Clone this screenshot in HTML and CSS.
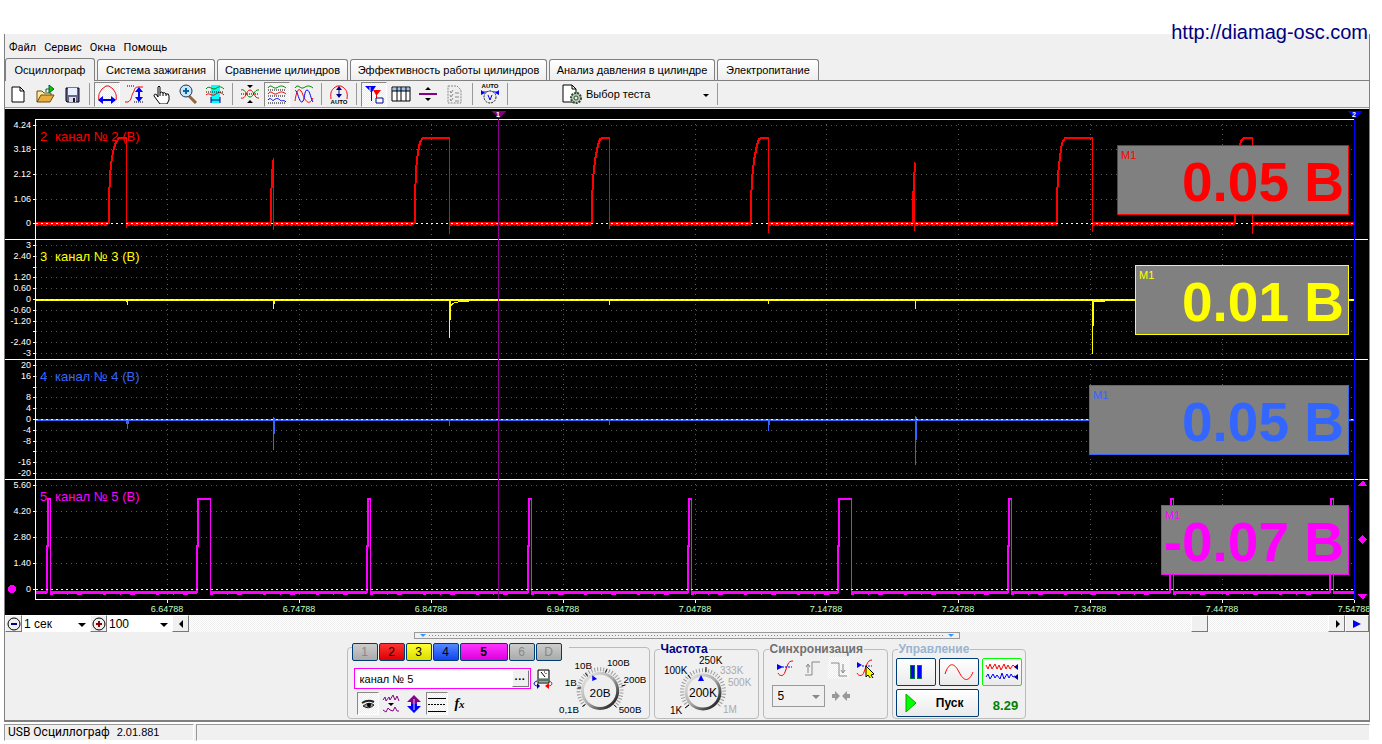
FILE: index.html
```html
<!DOCTYPE html>
<html lang="ru">
<head>
<meta charset="utf-8">
<title>USB Осциллограф</title>
<link rel="stylesheet" href="styles.css">
</head>
<body>
<a class="site-link" href="http://diamag-osc.com">http://diamag-osc.com</a>
<main class="app">
  <nav class="menu">
    <button>Файл</button><button>Сервис</button><button>Окна</button><button>Помощь</button>
  </nav>
  <div class="tabs" role="tablist">
    <button class="tab active" role="tab" aria-selected="true">Осциллограф</button>
    <button class="tab ignition" role="tab">Система зажигания</button>
    <button class="tab compare" role="tab">Сравнение цилиндров</button>
    <button class="tab efficiency" role="tab">Эффективность работы цилиндров</button>
    <button class="tab pressure" role="tab">Анализ давления в цилиндре</button>
    <button class="tab power" role="tab">Электропитание</button>
  </div>
  <div class="toolbar">
    <div class="group">
      <button class="tool" aria-label="Новый"><svg viewBox="0 0 20 20"><path d="M4 3h8l4 4v11H4z" fill="#fff" stroke="#000"/><path d="M12 3v4h4" fill="none" stroke="#000"/></svg></button>
      <button class="tool" aria-label="Открыть"><svg viewBox="0 0 20 20"><path d="M2 18V7h5l2 2h7v3" fill="#ffe9a0" stroke="#6b4c10"/><path d="M2 18l4-7h13l-4 7z" fill="#e8ad3c" stroke="#6b4c10"/><path d="M11 8V5h3" fill="none" stroke="#063"/><path d="M14 1v8l5-4z" fill="#0c0" stroke="#063"/></svg></button>
      <button class="tool" aria-label="Сохранить"><svg viewBox="0 0 20 20"><path d="M4 4h13v14H5l-1-1z" fill="#668" stroke="#002"/><path d="M6 4h9v7H6z" fill="#e8f0ff"/><path d="M7 13h7v5H7z" fill="#ddd"/><path d="M11 14h2v4h-2z" fill="#113"/></svg></button>
    </div>
    <i class="sep"></i>
    <div class="group">
      <button class="tool on" aria-label="Масштаб по времени"><svg viewBox="0 0 20 20"><path d="M2 16C1 10 3 8 5 5l4-3h3l4 3c2 3 4 5 3 11" fill="none" stroke="#f00"/><path d="M2 16h16" stroke="#00f" stroke-width="2"/><path d="M1 16l5-4v8zM19 16l-5-4v8z" fill="#00f"/></svg></button>
      <button class="tool" aria-label="Масштаб по уровню"><svg viewBox="0 0 20 20"><path d="M1 18h3c4-2 3-6 5-9s1-6 5-6h5" fill="none" stroke="#f00"/><path d="M3 2h8M10 18h9" stroke="#000" stroke-dasharray="1 1"/><path d="M15 6v10" stroke="#00f" stroke-width="2"/><path d="M15 3l4 5h-8zM15 18l4-5h-8z" fill="#00f"/></svg></button>
      <button class="tool" aria-label="Рука"><svg viewBox="0 0 20 20"><path d="M7 13V3q1-2 2 0v6q2-2 3 0 2-1 3 1 3-1 3 2v4l-2 4H9L3 12q0-3 3-1z" fill="#fff" stroke="#000"/><path d="M9 9v3M12 9v3M15 10v2" stroke="#000"/></svg></button>
      <button class="tool" aria-label="Лупа"><svg viewBox="0 0 20 20"><path d="M11 12l7 7" stroke="#963" stroke-width="3"/><circle cx="8" cy="7" r="6" fill="#cde6f5" stroke="#235"/><path d="M5 7h6M8 4v6" stroke="#06a" stroke-width="2"/></svg></button>
      <button class="tool" aria-label="Выделение"><svg viewBox="0 0 20 20"><path d="M6 1h9v18H6z" fill="#0ff"/><path d="M1 5c3-4 5 0 8 0s5-5 10 0" fill="none" stroke="#080"/><path d="M1 11c3-3 5 1 8 0s5-5 10 0" fill="none" stroke="#f00"/><path d="M1 8h18" stroke="#000" stroke-dasharray="1 1"/><path d="M6 16h9M6 13v6M15 13v6" stroke="#008"/></svg></button>
    </div>
    <i class="sep"></i>
    <div class="group">
      <button class="tool" aria-label="Центрировать"><svg viewBox="0 0 20 20"><path d="M1 6c5-2 5 7 9 7s4-8 9-7" fill="none" stroke="#080"/><path d="M1 14c5 2 5-8 9-8s4 9 9 8" fill="none" stroke="#f00"/><path d="M1 10h18" stroke="#000" stroke-dasharray="1 1"/><path d="M7 1h6l-3 3zM7 19h6l-3-3z"/></svg></button>
      <button class="tool on" aria-label="Раздельно"><svg viewBox="0 0 20 20"><path d="M1 4c3-5 5 1 8 0s5-4 10 0" fill="none" stroke="#080"/><path d="M1 10c3-5 5 1 8 0s5-4 10 0" fill="none" stroke="#f00"/><path d="M1 16c3-4 4 2 6 0s4-2 6 0 3-1 6 2" fill="none" stroke="#00f"/><path d="M1 6h18M1 12h18M1 19h18" stroke="#000" stroke-dasharray="1 1"/></svg></button>
      <button class="tool" aria-label="Совместно"><svg viewBox="0 0 20 20"><path d="M1 4c3-5 5 1 8 0s5-4 10 0" fill="none" stroke="#080"/><path d="M1 17C3 3 6 3 9 11s7 10 10 3" fill="none" stroke="#f00"/><path d="M1 7c2-3 4 12 7 11s2-12 5-12 4 10 6 12" fill="none" stroke="#00f"/></svg></button>
    </div>
    <i class="sep"></i>
    <div class="group">
      <button class="tool" aria-label="Автомасштаб"><svg viewBox="0 0 20 20"><path d="M2 15C1 8 3 6 5 4l3-2h4l3 2c2 2 4 4 3 11" fill="none" stroke="#f00"/><path d="M10 5v7" stroke="#008"/><path d="M7 6h6l-3-4zM7 10h6l-3 4z" fill="#008"/><text x="10" y="20" class="auto">AUTO</text></svg></button>
    </div>
    <i class="sep"></i>
    <div class="group">
      <button class="tool on" aria-label="Маркеры"><svg viewBox="0 0 20 20"><path d="M1 2h11L8 8v9H7V8z" fill="#00f"/><path d="M9 6h8l-4 5v5h-1v-5z" fill="#f00"/><path d="M6 3v4" stroke="#fff"/><path d="M12 14h7v5h-7z" fill="#fff" stroke="#008"/></svg></button>
      <button class="tool" aria-label="Таблица"><svg viewBox="0 0 20 20"><path d="M1 3h18v14H1z" fill="#fff" stroke="#000"/><path d="M2 4h16v3H2z" fill="#9bc4ee"/><path d="M1 7h18M6 3v14M10 3v14M15 3v14" stroke="#000"/></svg></button>
      <button class="tool" aria-label="Разделитель"><svg viewBox="0 0 20 20"><path d="M1 10h18" stroke="#808" stroke-width="2"/><path d="M7 6h6l-3-3zM7 14h6l-3 3z"/></svg></button>
      <button class="tool" aria-label="Список"><svg viewBox="0 0 20 20"><path d="M3 2h9l4 4v13H3z" fill="#eee" stroke="#888" stroke-dasharray="2 1"/><path d="M5 7l1 2 2-3M5 11l1 2 2-3M5 15l1 2 2-3M10 9h4M10 13h4M10 17h4" fill="none" stroke="#888"/></svg></button>
    </div>
    <i class="sep"></i>
    <div class="group">
      <button class="tool" aria-label="Авто"><svg viewBox="0 0 20 20"><text x="10" y="4" class="auto">AUTO</text><path d="M3 8h5l2-1 2 1h5" fill="none" stroke="#00f"/><path d="M1 6v5l4-2zM19 6v5l-4-2z" fill="#00f"/><circle cx="10" cy="13" r="6" fill="#eee" stroke="#222" stroke-dasharray="2 1"/><path d="M8 11l2 5 2-5" fill="none" stroke="#00f"/></svg></button>
    </div>
    <i class="sep"></i>
    <label class="test">
      <svg viewBox="0 0 20 20"><path d="M1 1h9l4 4v13H1z" fill="#fff" stroke="#000"/><path d="M10 1v4h4" fill="none" stroke="#000"/><circle cx="14" cy="14" r="5" fill="#b5cbb0" stroke="#354a35" stroke-width="2" stroke-dasharray="2 1"/><circle cx="14" cy="14" r="2" fill="#eee" stroke="#354a35"/></svg>
      <select aria-label="Выбор теста"><option>Выбор теста</option></select>
    </label>
    <i class="sep"></i>
  </div>

  <section class="scope" aria-label="Осциллограммы">
    <svg class="chart" viewBox="5 109 1364 506">
      <rect x="5" y="109" width="1364" height="506"/>
      <g class="dots">
        <path d="M36 125H1354M36 149H1354M36 174H1354M36 199H1354"/>
        <path d="M36 245H1354M36 256H1354M36 267H1354M36 277H1354M36 288H1354M36 310H1354M36 321H1354M36 331H1354M36 342H1354M36 353H1354"/>
        <path d="M36 365H1354M36 376H1354M36 387H1354M36 397H1354M36 408H1354M36 430H1354M36 441H1354M36 451H1354M36 462H1354M36 473H1354"/>
        <path d="M36 485H1354M36 511H1354M36 537H1354M36 563H1354"/>
        <path d="M167 124V599M299 124V599M431 124V599M563 124V599M695 124V599M826 124V599M958 124V599M1090 124V599M1222 124V599"/>
      </g>
      <g class="frame">
        <path d="M35 119H1355M35 119V600M35 599H1355M5 239H1368M5 359H1368M5 479H1368"/>
        <path d="M33 125h3M33 149h3M33 174h3M33 199h3M33 223h3M33 245h3M33 256h3M33 267h3M33 277h3M33 288h3M33 299h3M33 310h3M33 321h3M33 331h3M33 342h3M33 353h3M33 365h3M33 376h3M33 387h3M33 397h3M33 408h3M33 419h3M33 430h3M33 441h3M33 451h3M33 462h3M33 473h3M33 485h3M33 511h3M33 537h3M33 563h3M33 589h3"/>
        <path d="M167 600v3M299 600v3M431 600v3M563 600v3M695 600v3M826 600v3M958 600v3M1090 600v3M1222 600v3M1354 600v3"/>
      </g>
      <g class="level">
        <text x="31" y="128">4.24</text><text x="31" y="152">3.18</text><text x="31" y="177">2.12</text><text x="31" y="202">1.06</text><text x="31" y="226">0</text>
        <text x="31" y="248">3</text><text x="31" y="259">2.40</text><text x="31" y="280">1.20</text><text x="31" y="291">0.60</text><text x="31" y="302">0</text><text x="31" y="313">-0.60</text><text x="31" y="324">-1.20</text><text x="31" y="345">-2.40</text><text x="31" y="356">-3</text>
        <text x="31" y="368">20</text><text x="31" y="379">16</text><text x="31" y="400">8</text><text x="31" y="411">4</text><text x="31" y="422">0</text><text x="31" y="433">-4</text><text x="31" y="444">-8</text><text x="31" y="465">-16</text><text x="31" y="476">-20</text>
        <text x="31" y="488">5.60</text><text x="31" y="514">4.20</text><text x="31" y="540">2.80</text><text x="31" y="566">1.40</text><text x="31" y="592">0</text>
      </g>
      <g class="time">
        <text x="167" y="612">6.64788</text><text x="299" y="612">6.74788</text><text x="431" y="612">6.84788</text><text x="563" y="612">6.94788</text><text x="695" y="612">7.04788</text><text x="826" y="612">7.14788</text><text x="958" y="612">7.24788</text><text x="1090" y="612">7.34788</text><text x="1222" y="612">7.44788</text><text x="1354" y="612">7.54788</text>
      </g>
      <g class="names">
        <text x="40" y="141" fill="#f00">2</text><text x="55" y="141" fill="#f00">канал № 2 (В)</text>
        <text x="40" y="261" fill="#ff0">3</text><text x="55" y="261" fill="#ff0">канал № 3 (В)</text>
        <text x="40" y="381" fill="#36f">4</text><text x="55" y="381" fill="#36f">канал № 4 (В)</text>
        <text x="40" y="501" fill="#f0f">5</text><text x="55" y="501" fill="#f0f">канал № 5 (В)</text>
      </g>
      <g class="trace" stroke="#f00">
        <path class="base" d="M36 223H108M127 223H271M273 223H414M449 223H591M609 223H751M768 223H913M915 223H1057M1092 223H1235M1252 223H1354"/>
        <path class="noise" d="M36 225H108M127 225H271M273 225H414M449 225H591M609 225H751M768 225H913M915 225H1057M1092 225H1235M1252 225H1354"/>
        <path class="rise" d="M109 224V200L110 175 112 157 114 148 116 142 119 138 123 138H127"/>
        <path class="rise" d="M271 224V198L273 160"/>
        <path class="rise" d="M415 224V198L416 170 418 152 420 142 423 138H449"/>
        <path class="rise" d="M592 224V202L593 179 595 160 598 145 600 139 603 138H609"/>
        <path class="rise" d="M751 224V202L752 179 754 160 757 145 759 139 762 138H769"/>
        <path class="rise" d="M913 224V200L915 163"/>
        <path class="rise" d="M1057 224V200L1058 175 1060 157 1062 143 1065 138H1092"/>
        <path class="rise" d="M1235 224V202L1236 179 1238 155 1241 141 1244 138H1252"/>
        <path d="M126 137V228M273 158V230M449 137V234M609 137V229M768 137V233M914 162V231M1092 137V232M1252 137V234"/>
      </g>
      <g class="trace" stroke="#ff0">
        <path class="rise" d="M36 300H1354"/>
        <path d="M127 300V305M126 300V302M273 300V309M274 300V304M449 300V338M450 300V320M451 306Q453 301 469 301M609 300V305M768 300V304M915 300V309M1092 300V354M1093 300V326M1093 301H1105"/>
      </g>
      <g class="trace" stroke="#36f">
        <path class="rise" d="M36 420H1354"/>
        <path d="M127 420V429M126 420V424M128 420V424M273 417V450M274 418V434M449 420V426M609 420V425M768 420V431M769 420V425M915 416V465M916 417V440M1092 420V430"/>
      </g>
      <g class="trace" stroke="#f0f">
        <path class="base" d="M36 592H47M50 592H197M210 592H367M370 592H528M531 592H688M691 592H838M851 592H1008M1011 592H1170M1173 592H1330M1333 592H1354"/>
        <path class="noise wide" d="M50 594H197M210 594H367M370 594H528M531 594H688M691 594H838M851 594H1008M1011 594H1170M1173 594H1330"/>
        <path class="rise" d="M47 593V546L48 546V499H51M197 593V546H198V499H211M367 593V546H368V499H371M528 593V546H529V499H532M688 593V546H689V499H692M838 593V546H839V499H852M1008 593V546H1009V499H1012M1170 593V546H1171V499H1174M1330 593V546H1331V499H1334"/>
        <path d="M50 498V593M210 498V593M370 498V593M531 498V593M691 498V593M851 498V593M1011 498V593M1173 498V593M1333 498V593"/>
      </g>
      <path class="zero" d="M36 223H1354M36 299H1354M36 419H1354M36 589H1354"/>
      <rect x="498" y="119" width="1" height="480" fill="#900090"/>
      <path d="M491 111h15l-7 8z" fill="#800080"/>
      <rect x="1354" y="119" width="1" height="481" fill="#00f"/>
      <path d="M1347 111h15l-7 8z" fill="#00f"/>
      <text class="mark" x="498" y="117">1</text><text class="mark" x="1354" y="117">2</text>
      <circle cx="12" cy="589" r="4" fill="#f0f"/>
      <path d="M1358 486h9l-4-6zM1358 594h9l-4 6zM1362 535l5 4-5 5-4-5z" fill="#f0f"/>
    </svg>
    <div class="readouts">
      <div class="slot"><output class="readout red"><small>M1</small>0.05 В</output></div>
      <div class="slot"><output class="readout yellow"><small>M1</small>0.01 В</output></div>
      <div class="slot"><output class="readout blue"><small>M1</small>0.05 В</output></div>
      <div class="slot"><output class="readout pink"><small>M1</small>-0.07 В</output></div>
    </div>
  </section>

  <div class="timebar">
    <button class="raised" aria-label="Уменьшить"><svg viewBox="0 0 14 14"><circle cx="7" cy="7" r="6" fill="none" stroke="#000"/><path d="M4 7h6" stroke="#008" stroke-width="2"/></svg></button>
    <label class="drop"><select aria-label="Развёртка"><option>1 сек</option></select></label>
    <button class="raised" aria-label="Увеличить"><svg viewBox="0 0 14 14"><circle cx="7" cy="7" r="6" fill="none" stroke="#000"/><path d="M4 7h6M7 4v6" stroke="#800" stroke-width="2"/></svg></button>
    <label class="drop short"><select aria-label="Масштаб, %"><option>100</option></select></label>
    <button class="raised" aria-label="Влево"><svg viewBox="0 0 14 14"><path d="M9 3v8L5 7z"/></svg></button>
    <input class="scroll" type="range" min="0" max="1120" value="1000" aria-label="Прокрутка">
    <button class="raised" aria-label="Вправо"><svg viewBox="0 0 14 14"><path d="M6 3v8l4-4z"/></svg></button>
    <button class="raised play" aria-label="В конец"><svg viewBox="0 0 14 14"><path d="M3 3v8l8-4z" fill="#00f"/></svg></button>
  </div>
  <div class="splitter"><i></i><i></i></div>

  <div class="panels">
    <section class="panel channel" aria-label="Канал">
      <div class="channel-left">
        <div class="channels">
          <button class="ch">1</button><button class="ch c2">2</button><button class="ch c3">3</button><button class="ch c4">4</button><button class="ch c5">5</button><button class="ch">6</button><button class="ch">D</button>
        </div>
        <div class="name-row">
          <div class="name"><input type="text" value="канал № 5" aria-label="Имя канала"><button class="raised" aria-label="Выбрать">···</button></div>
          <button class="flat" aria-label="Прибор"><svg viewBox="0 0 20 20"><path d="M5 1h11v13H5z" fill="#ddd" stroke="#000"/><path d="M6 2h9v7H6z" fill="#fff"/><path d="M8 3l4 5M13 4v1M11 3h1" stroke="#000"/><path d="M5 11h11" stroke="#576" stroke-width="3"/><path d="M4 12c-4 1-4 5 1 5" fill="none" stroke="#008"/><path d="M4 14l3 3-3 3z" fill="#008"/><path d="M16 12c4 1 4 5-1 5" fill="none" stroke="#f00"/><path d="M16 14l-4 3 4 3z" fill="#f00"/></svg></button>
        </div>
        <div class="options">
          <button class="tool on" aria-label="Видимость"><svg viewBox="0 0 20 20"><path d="M4 9q6-4 12-1" fill="none" stroke="#222" stroke-width="2"/><path d="M5 12q6-5 11-1-5 5-11 1z" fill="#999" stroke="#222"/><circle cx="11" cy="11" r="2"/></svg></button>
          <button class="tool" aria-label="Сглаживание"><svg viewBox="0 0 20 20"><path d="M2 6l2-3 1 4 3-4 1 3 3-5 2 5 2-4 2 5M2 16l3 2 2-4 2 2 3 1 2-4 2 4h2" fill="none" stroke="#808"/><path d="M7 9h6l-3 3z"/></svg></button>
          <button class="tool" aria-label="Сдвиг"><svg viewBox="0 0 20 20"><path d="M10 1l7 7h-4v2H7V8H3z" fill="#808"/><path d="M10 19l7-7h-4v-2H7v2H3z" fill="#00f"/><path d="M10 5v11" stroke="#ccf"/></svg></button>
          <button class="tool on" aria-label="Уровни"><svg viewBox="0 0 20 20" shape-rendering="crispEdges"><path d="M1 4h18M1 17h18" stroke="#000"/><path d="M1 10h18" stroke="#000" stroke-dasharray="2 1"/></svg></button>
          <button class="tool fx" aria-label="Функция">f<sub>x</sub></button>
        </div>
      </div>
      <svg class="knob" viewBox="556 648 94 72">
        <defs><linearGradient id="rim" x2="1" y2="1"><stop offset="0" stop-color="#eee"/><stop offset=".5" stop-color="#aaa"/><stop offset="1" stop-color="#000"/></linearGradient></defs>
        <path class="ticks" d="M584 706A22 22 0 1 1 616 706"/>
        <path d="M582 707l3-2M577 688h4M585 673l3 4M607 669l-2 4M622 686l4-1M614 705l3 3" stroke="#000"/>
        <circle cx="600" cy="691" r="18" fill="#efefef" stroke="url(#rim)" stroke-width="3"/>
        <path d="M592 675v6l5-2z" fill="#00f"/>
        <text x="558" y="714">0,1В</text><text x="564" y="686">1В</text><text x="574" y="669">10В</text><text x="607" y="666">100В</text><text x="624" y="683">200В</text><text x="619" y="714">500В</text>
        <text class="value" x="600" y="697">20В</text>
      </svg>
    </section>

    <fieldset class="panel freq">
      <legend>Частота</legend>
      <svg class="knob" viewBox="655 655 102 62">
        <path class="ticks" d="M688 706A21 21 0 1 1 718 706"/>
        <path d="M685 708l4-3M688 675l3 4M706 667v5" stroke="#000"/>
        <circle cx="703" cy="692" r="17" fill="#efefef" stroke="url(#rim)" stroke-width="3"/>
        <path d="M698 681h6l-3-6z" fill="#00f"/>
        <text x="670" y="714">1K</text><text x="664" y="674">100K</text><text x="699" y="664">250K</text>
        <g class="dim"><text x="720" y="674">333K</text><text x="728" y="686">500K</text><text x="723" y="713">1M</text></g>
        <text class="value" x="703" y="697">200K</text>
      </svg>
    </fieldset>

    <fieldset class="panel sync">
      <legend>Синхронизация</legend>
      <div class="sync-row">
        <button class="tool" aria-label="Уровень"><svg viewBox="0 0 20 20"><path d="M3 15c2 4 6 3 7-1l3-8c1-2 2-3 5-3" fill="none" stroke="#f00"/><path d="M2 6v6l6-3z" fill="#00f"/><path d="M7 9h10" stroke="#00f" stroke-dasharray="2 1"/></svg></button>
        <button class="tool" aria-label="По фронту" disabled><svg viewBox="0 0 20 20"><path d="M3 17h7V4h8M6 7v8M4 9l2-3 2 3" fill="none" stroke="#888"/></svg></button>
        <button class="tool check" aria-label="По спаду" disabled><svg viewBox="0 0 20 20"><path d="M2 5h8v13h8M14 6v8M12 12l2 3 2-3" fill="none" stroke="#888"/></svg></button>
        <button class="tool" aria-label="Указать"><svg viewBox="0 0 20 20"><path d="M1 15c2 4 6 3 7-1l3-8c1-2 2-4 5-4" fill="none" stroke="#f00"/><path d="M1 4v6l5-3z" fill="#00f"/><path d="M6 8h10" stroke="#00f" stroke-dasharray="2 1"/><path d="M10 8l8 8-3 1 2 3-2 1-3-4-2 2z" fill="#ff0" stroke="#000"/></svg></button>
      </div>
      <div class="sync-row second">
        <label class="drop boxed"><select aria-label="Номер канала"><option>5</option></select></label>
        <svg class="meet" viewBox="0 0 18 12"><path d="M0 4h3V1l5 5-5 5V8H0zM18 4h-3V1l-5 5 5 5V8h3z" fill="#999"/></svg>
      </div>
    </fieldset>

    <fieldset class="panel control">
      <legend>Управление</legend>
      <div class="control-grid">
        <button class="cmd" aria-label="Пауза"><svg viewBox="0 0 34 22"><path d="M11 4h5v14h-5zM18 4h5v14h-5z" fill="#074"/><path d="M12 5h3v12h-3zM19 5h3v12h-3z" fill="#00f"/></svg></button>
        <button class="cmd" aria-label="Синусоида"><svg viewBox="0 0 34 22"><path d="M3 13C7 1 12 1 17 11s10 10 14 0" fill="none" stroke="#f00"/></svg></button>
        <button class="cmd live" aria-label="Поток"><svg viewBox="0 0 34 22"><path d="M1 4l2 4 2-5 2 5 3-5 2 5 2-4 2 5 3-6 2 5 2-4 2 4 3-4 2 2" fill="none" stroke="#f00"/><path d="M1 16l2-3 2 5 3-5 2 4 2-3 3 4 2-6 2 6 3-5 2 4 2-4 2 3 2-1" fill="none" stroke="#00f"/><path d="M33 3v6l-4-3zM33 13v6l-4-3z" fill="#008"/></svg></button>
        <button class="cmd start"><svg viewBox="0 0 12 20"><path d="M1 1v18l10-9z" fill="#0f0" stroke="#0a0"/></svg><span>Пуск</span></button>
        <output class="rate">8.29</output>
      </div>
    </fieldset>
  </div>
</main>
<footer class="status"><span class="cell first">USB Осциллограф<span>2.01.881</span></span><span class="cell"></span></footer>
</body>
</html>
```
FILE: styles.css
```css
* { box-sizing: border-box; }
body {
  margin: 0;
  padding: 34px 12px 0 4px;
  background: #fff;
  color: #000;
  font: 11px "Liberation Sans", Arial, sans-serif;
  position: relative;
}
button, input, select { font: inherit; color: inherit; margin: 0; padding: 0; border: 0; background: none; border-radius: 0; }
select { appearance: none; outline: 0; }
svg { display: block; }
.site-link { position: absolute; right: 14px; top: 20px; font-size: 20px; line-height: 24px; color: #000080; text-decoration: none; }
.app { background: #f0f0f0; border-right: 1px solid #808080; border-bottom: 2px solid #808080; border-left: 1px solid #808080; }
.menu { display: flex; gap: 8px; height: 24px; padding: 2px 4px 0; font-family: Roboto, sans-serif; }

.tabs { display: flex; align-items: flex-end; gap: 2px; height: 23px; border-bottom: 1px solid #808080; }
.tab { height: 21px; border: 1px solid #808080; border-bottom: 0; border-radius: 3px 3px 0 0; background: linear-gradient(#fff, #eee); white-space: nowrap; }
.tab.active { width: 90px; height: 23px; margin-bottom: -1px; background: #f0f0f0; }
.ignition { width: 118px; }
.compare { width: 131px; }
.efficiency { width: 197px; }
.pressure { width: 166px; }
.power { width: 102px; }

.toolbar { display: flex; align-items: center; height: 26px; }
.group { display: flex; gap: 1px; }
.tool { display: grid; place-items: center; width: 26px; height: 25px; border: 1px solid transparent; }
.tool svg { width: 20px; height: 20px; }
.tool.on { border-color: #888 #fff #fff #888; background: repeating-conic-gradient(#fff 0 25%, #ececec 0 50%) 0 0 / 2px 2px; }
.check { background: repeating-conic-gradient(#fff 0 25%, #ececec 0 50%) 0 0 / 2px 2px; }
.sep { width: 9px; height: 22px; background: linear-gradient(#999, #999) center / 1px 100% no-repeat; }
.auto { font: bold 6px "Liberation Sans", sans-serif; text-anchor: middle; }
.test { position: relative; display: flex; align-items: center; gap: 4px; width: 151px; margin: 0 0 0 50px; }
.test svg { width: 20px; height: 20px; }
.test select { flex: 1; min-width: 0; }
.test::after, .drop::after { content: ""; position: absolute; right: 4px; top: 50%; border: 3px solid transparent; border-top: 3px solid #000; border-bottom: 0; }

.scope { position: relative; border-top: 1px solid #999; padding-top: 1px; }
.chart { width: 100%; height: auto; shape-rendering: crispEdges; font-family: "Liberation Sans", Arial, sans-serif; }
.dots { stroke: #5a5a5a; stroke-dasharray: 1 4; }
.frame { stroke: #fff; fill: none; }
.level { fill: #fff; font-size: 9px; text-anchor: end; }
.time { fill: #c0ffc0; font-size: 9px; text-anchor: middle; }
.names { font-size: 13px; }
.trace { fill: none; stroke-width: 1; }
.base { stroke-width: 3; }
.rise { stroke-width: 2; }
.noise { stroke-dasharray: 3 2 1 1 4 3 1 2; }
.noise.wide { stroke-dasharray: 3 14 1 9 5 21; }
.zero { stroke: #fff; stroke-dasharray: 2 3; fill: none; }
.mark { fill: #fff; font-size: 7px; font-weight: bold; text-anchor: middle; }
.readouts { position: absolute; inset: 12px 20px 15px auto; display: grid; grid-template-rows: repeat(4, 1fr); }
.slot { display: flex; justify-content: flex-end; align-items: flex-start; padding-top: 25px; }
.readout { position: relative; height: 70px; border: 1px solid; background: #808080; padding-right: 4px; font-size: 55px; line-height: 72px; font-weight: bold; text-align: right; white-space: nowrap; }
.readout small { position: absolute; left: 3px; top: 3px; font: 11px/12px "Liberation Sans", sans-serif; }
.red { color: #f00; width: 232px; }
.yellow { color: #ff0; width: 214px; }
.blue { color: #36f; width: 260px; }
.pink { color: #f0f; width: 188px; }

.timebar { display: flex; height: 17px; background: #fff; font-size: 12px; }
.raised { display: grid; place-items: center; width: 17px; background: #f0f0f0; border: 1px solid; border-color: #fff #777 #777 #fff; }
.raised svg { width: 14px; height: 14px; }
.play { width: 24px; }
.drop { position: relative; display: flex; width: 68px; }
.drop select { width: 100%; padding-left: 2px; }
.drop::after { border-width: 4px 4px 0; margin-top: -1px; }
.drop.short { width: 65px; }
.scroll { flex: 1; min-width: 0; appearance: none; height: 17px; background: repeating-conic-gradient(#fff 0 25%, #f0f0f0 0 50%) 0 0 / 2px 2px; }
.scroll::-webkit-slider-thumb { appearance: none; width: 17px; height: 17px; background: #f0f0f0; border: 1px solid; border-color: #fff #777 #777 #fff; }
.splitter { display: flex; justify-content: space-between; width: 40%; height: 7px; margin: 0 auto 4px; padding: 1px 5px; border: 1px solid #999; background: repeating-linear-gradient(90deg, #39f 0 1px, transparent 1px 3px) center / calc(100% - 28px) 1px no-repeat; }
.splitter i { border: 3px solid transparent; border-top: 3px solid #39f; border-bottom: 0; }

.panels { display: flex; justify-content: center; align-items: stretch; gap: 4px; height: 76px; margin-bottom: 1px; padding-right: 2px; }
.panel { position: relative; min-width: 0; margin: 0; padding: 0; border: 1px solid #bbb; border-radius: 4px; }
.panel legend { margin-left: 5px; padding: 0 1px; font-weight: bold; font-size: 12px; line-height: 12px; color: #000080; }
.channel { display: flex; width: 303px; margin-top: 4px; }
.channel-left { width: 209px; padding-left: 4px; margin-top: -5px; }
.channels { display: flex; gap: 1px; width: 217px; padding-right: 7px; background: #f0f0f0; }
.ch { width: 26px; height: 18px; border: 1px solid #003c74; border-radius: 2px; background: linear-gradient(#ccc, #aaa); color: #888; font-size: 12px; }
.c2 { background: linear-gradient(#f33, #d00); color: #000; }
.c3 { background: linear-gradient(#ff3, #dd0); color: #000; }
.c4 { background: linear-gradient(#58f, #14e); color: #000; }
.c5 { width: 48px; background: linear-gradient(#f3f, #d0d); color: #000; font-weight: bold; }
.name-row { display: flex; align-items: center; gap: 2px; margin: 7px 0 3px 2px; }
.name { display: flex; width: 177px; height: 21px; border: 1px solid #f0f; background: #fff; }
.name input { flex: 1; min-width: 0; padding-left: 5px; font-size: 11px; }
.name .raised { margin: 1px; font-weight: bold; }
.flat svg { width: 20px; height: 20px; }
.options { display: flex; gap: 1px; padding-left: 5px; }
.options .tool { width: 22px; height: 23px; }
.options .fx { display: block; font: italic bold 14px "Liberation Serif", serif; }
.fx sub { font-size: 11px; vertical-align: baseline; }
.knob { font: 10px "Liberation Sans", sans-serif; }
.channel .knob { width: 94px; height: 72px; }
.freq .knob { width: 102px; height: 62px; }
.ticks { fill: none; stroke: #999; stroke-width: 4; stroke-dasharray: 1 2; }
.knob .value { font-size: 12px; text-anchor: middle; }
.dim { fill: #aaa; }
.freq { width: 105px; }
.sync { width: 125px; }
.sync legend { color: #707070; }
.sync-row { display: flex; align-items: center; gap: 5px; padding: 2px 10px 0; }
.sync .tool { width: 22px; height: 22px; }
.second { padding: 6px 8px 0; gap: 7px; }
.boxed { width: 53px; height: 22px; border: 1px solid #999; font-size: 12px; }
.boxed::after { border-top-color: #888; }
.boxed select { padding-left: 5px; }
.meet { width: 18px; height: 12px; }
.control { width: 134px; }
.control legend { color: #99b4d1; }
.control-grid { display: grid; grid-template-columns: 40px 40px 40px; grid-template-rows: 28px 28px; gap: 3px; padding: 3px; }
.cmd { display: grid; place-items: center; border: 1px solid #003c74; border-radius: 2px; background: linear-gradient(#fff, #eaeaea); }
.cmd svg { width: 34px; height: 22px; }
.live { border-color: #0f0; }
.start { grid-column: span 2; display: flex; align-items: center; padding: 0 14px 0 8px; justify-content: space-between; font-size: 12px; font-weight: bold; }
.cmd.start svg { width: 12px; height: 20px; }
.rate { align-self: end; justify-self: center; padding: 0 0 4px 8px; color: #008000; font-size: 13px; font-weight: bold; }

.status { display: flex; gap: 2px; height: 17px; margin-top: 2px; background: #f0f0f0; font-family: Roboto, sans-serif; font-size: 12px; }
.cell { flex: 1; border: 1px solid; border-color: #999 #fff #fff #999; line-height: 15px; padding-left: 3px; }
.first { flex: 0 0 190px; }
.first span { margin-left: 7px; font: 11px "Liberation Sans", sans-serif; }
```
